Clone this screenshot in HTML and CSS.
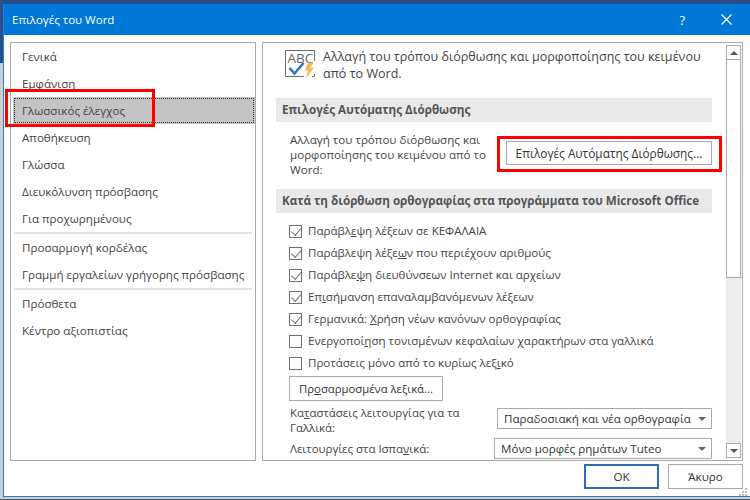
FILE: index.html
```html
<!DOCTYPE html>
<html lang="el">
<head>
<meta charset="utf-8">
<title>Επιλογές του Word</title>
<link rel="stylesheet" href="styles.css">
</head>
<body>
<div class="desktop">
  <div class="dialog">
    <header class="titlebar">
      <span class="title">Επιλογές του Word</span>
      <span class="help">?</span>
      <svg class="close" width="11" height="11" viewBox="0 0 11 11"><path d="M.5.5l10 10M10.5.5l-10 10" stroke="#fff" stroke-width="1.2" fill="none"/></svg>
    </header>
    <div class="body">
      <div class="panes">
        <nav class="nav">
          <div class="nav-item">Γενικά</div>
          <div class="nav-item">Εμφάνιση</div>
          <div class="nav-item selected"><span>Γλωσσικός έλεγχος</span></div>
          <div class="nav-item">Αποθήκευση</div>
          <div class="nav-item">Γλώσσα</div>
          <div class="nav-item">Διευκόλυνση πρόσβασης</div>
          <div class="nav-item">Για προχωρημένους</div>
          <div class="nav-sep"></div>
          <div class="nav-item">Προσαρμογή κορδέλας</div>
          <div class="nav-item">Γραμμή εργαλείων γρήγορης πρόσβασης</div>
          <div class="nav-sep"></div>
          <div class="nav-item">Πρόσθετα</div>
          <div class="nav-item">Κέντρο αξιοπιστίας</div>
        </nav>
        <main class="content">
          <div class="scroll-area">
            <div class="intro">
              <svg class="abc" width="31" height="29" viewBox="0 0 31 29">
                <path d="M19 26.5H.5V.5h29V11M27 26.5h2.500V24" fill="none" stroke="#6d6d6d"/>
                <text x="2.500" y="12.500" class="abc-text">ABC</text>
                <path d="M4.500 18l5 5.500 9-10.500" fill="none" stroke="#2f75b5" stroke-width="2.600"/>
                <path d="M23 12.500h5.500l-3 5h3.500l-8 11 2-8h-3z" fill="#f4b860"/>
              </svg>
              <p>Αλλαγή του τρόπου διόρθωσης και μορφοποίησης του κειμένου από το Word.</p>
            </div>
            <h2 class="section">Επιλογές Αυτόματης Διόρθωσης</h2>
            <div class="autocorrect">
              <p>Αλλαγή του τρόπου διόρθωσης και μορφοποίησης του κειμένου από το Word:</p>
              <button class="btn btn-auto">Επιλογές Αυτόματης Διόρθωσης...</button>
            </div>
            <h2 class="section">Κατά τη διόρθωση ορθογραφίας στα προγράμματα του Microsoft Office</h2>
            <ul class="checks">
              <li><span class="box checked"></span><span class="check-label">Παράβλ<u>ε</u>ψη λέξεων σε ΚΕΦΑΛΑΙΑ</span></li>
              <li><span class="box checked"></span><span class="check-label">Παράβλεψη λέξε<u>ω</u>ν που περιέχουν αριθμούς</span></li>
              <li><span class="box checked"></span><span class="check-label">Παράβλε<u>ψ</u>η διευθύνσεων Internet και αρχείων</span></li>
              <li><span class="box checked"></span><span class="check-label">Επ<u>ι</u>σήμανση επαναλαμβανόμενων λέξεων</span></li>
              <li><span class="box checked"></span><span class="check-label">Γερμανικά: <u>Χ</u>ρήση νέων κανόνων ορθογραφίας</span></li>
              <li><span class="box"></span><span class="check-label">Ενεργοποί<u>η</u>ση τονισμένων κεφαλαίων χαρακτήρων στα γαλλικά</span></li>
              <li><span class="box"></span><span class="check-label">Προτάσεις μόνο από το κυρίως λεξ<u>ι</u>κό</span></li>
            </ul>
            <button class="btn btn-dict">Πρ<u>ο</u>σαρμοσμένα λεξικά...</button>
            <div class="field field-fr">
              <label>Κα<u>τ</u>αστάσεις λειτουργίας για τα Γαλλικά:</label>
              <div class="select sel-fr"><span>Παραδοσιακή και νέα ορθογραφία</span><i class="caret"></i></div>
            </div>
            <div class="field field-es">
              <label>Λειτουργίες στα Ισπα<u>ν</u>ικά:</label>
              <div class="select sel-es"><span>Μόνο μορφές ρημάτων Tuteo</span><i class="caret"></i></div>
            </div>
          </div>
          <div class="scrollbar">
            <div class="arrow up"><i></i></div>
            <div class="thumb"></div>
            <div class="track"></div>
            <div class="arrow down"><i></i></div>
          </div>
        </main>
      </div>
      <footer class="footer">
        <button class="btn btn-ok">OK</button>
        <button class="btn btn-cancel">Άκυρο</button>
      </footer>
    </div>
    <div class="highlight hl-nav"></div>
    <div class="highlight hl-btn"></div>
    <svg class="grip" width="9" height="9" viewBox="0 0 9 9"><path d="M6 0h2v2H6zM3 3h2v2H3zM6 3h2v2H6zM0 6h2v2H0zM3 6h2v2H3zM6 6h2v2H6z" fill="#bdbdbd"/></svg>
  </div>
</div>
</body>
</html>
```

FILE: styles.css
```css
* { box-sizing: border-box; }
html, body { margin: 0; padding: 0; }
body {
  width: 750px; height: 500px; overflow: hidden;
  font-family: "Open Sans", "Noto Sans", sans-serif;
  font-size: 11.6px; color: #444;
}
.desktop {
  width: 750px; height: 500px;
  background: linear-gradient(#2b4f8a 0, #2b4f8a 63px, #cfcfcf 63px, #cfcfcf 499px, #555 499px);
  padding: 4px 0 0 3px;
}
.dialog {
  position: relative;
  width: 747px; height: 493px;
  background: #fff;
  border-left: 1px solid #1883d7;
  border-bottom: 1px solid #1883d7;
  display: flex; flex-direction: column;
}
.titlebar {
  height: 31px; flex: none;
  background: #0078d7;
  color: #fff;
  display: flex; align-items: center;
  padding: 0 0 0 8px;
}
.title { font-size: 11.5px; flex: 1; }
.help { font-size: 13px; margin-right: 36px; }
.close { margin-right: 18px; }
.body { flex: 1; display: flex; flex-direction: column; padding: 7px 0 0 6px; }
.panes { display: flex; gap: 6px; height: 419px; }
.nav {
  width: 246px; flex: none;
  border: 1px solid #a9a9a9;
  padding: 0 0 0 2px;
  height: 419px;
}
.nav-item {
  height: 27px; line-height: 27px; padding-left: 9px;
  white-space: nowrap;
}
.nav-item.selected { background: #c4c4c4; padding: 1px; line-height: 23px; }
.nav-item.selected span { display: block; height: 25px; border: 1px dotted #333; padding-left: 7px; }
.nav-sep { height: 2px; background: #e6e6e6; margin: 0 3px 0 1px; }
.content {
  flex: none; width: 481px;
  border: 1px solid #a9a9a9;
  display: flex; height: 419px;
  overflow: hidden;
}
.scroll-area { flex: 1; min-width: 0; padding: 0 14px 0 13px; overflow: hidden; }
.intro { display: flex; gap: 7px; padding: 7px 0 0 9px; height: 55px; }
.intro p { margin: -2px 0 0; font-size: 12.55px; line-height: 17px; }
.abc { flex: none; overflow: visible; }
.abc-text { font: 13.5px "Open Sans", sans-serif; fill: #666; }
.section {
  margin: 0; height: 24px; line-height: 23px;
  background: #e9e9e9;
  padding-left: 6px;
  font-size: 11.65px; font-weight: 700; color: #555;
  white-space: nowrap; overflow: hidden;
}
.autocorrect { display: flex; height: 67px; padding: 10px 0 0 14px; gap: 6px; }
.autocorrect p { margin: 0; width: 210px; flex: none; line-height: 15px; }
.btn {
  background: #fff;
  border: 1px solid #a9a9a9;
  font: inherit; color: #333;
  padding: 0;
  height: 25px;
}
.btn-auto { width: 206px; height: 24px; font-size: 11.85px; flex: none; margin-top: 9px; }
.checks { list-style: none; margin: 0; padding: 7px 0 0 13px; }
.checks li { height: 22px; display: flex; align-items: center; gap: 6px; white-space: nowrap; font-size: 11.55px; }
.check-label { padding-bottom: 2px; }
.box { width: 13px; height: 13px; border: 1px solid #6e6e6e; flex: none; position: relative; }
.box.checked::after {
  content: ""; position: absolute; left: 3px; top: 0;
  width: 5px; height: 8px;
  border: solid #777; border-width: 0 1.5px 1.5px 0;
  transform: rotate(40deg);
}
.btn-dict { display: block; margin: 2px 0 0 13px; width: 154px; height: 25px; font-size: 11.3px; }
.field { display: flex; justify-content: space-between; padding-left: 14px; }
.field label { line-height: 15px; font-size: 11.45px; }
.field-fr { margin-top: 3px; }
.field-fr label { width: 190px; padding-top: 1px; }
.field-fr .select { margin-top: 4px; }
.field-es { margin-top: 3px; }
.field-es label { line-height: 21px; }
.select {
  border: 1px solid #a9a9a9; height: 21px; flex: none;
  display: flex; align-items: center; justify-content: space-between;
  padding: 0 5px 0 6px; font-size: 11.6px; color: #333; white-space: nowrap;
}
.sel-fr { width: 215px; }
.sel-es { width: 218px; }
.caret { width: 0; height: 0; border: 4px solid transparent; border-top: 4px solid #666; border-bottom: 0; }
.scrollbar { width: 15px; flex: none; display: flex; flex-direction: column; background: #ececec; margin: 2px 1px 2px 0; }
.arrow { height: 15px; border: 1px solid #a9a9a9; background: #fff; flex: none; display: flex; align-items: center; justify-content: center; }
.arrow i { width: 0; height: 0; border: 4px solid transparent; }
.up i { border-bottom: 4px solid #555; border-top: 0; }
.down i { border-top: 4px solid #555; border-bottom: 0; }
.thumb { height: 218px; border: 1px solid #a9a9a9; border-top: 0; background: #fff; flex: none; }
.track { flex: 1; }
.footer { display: flex; justify-content: flex-end; gap: 9px; padding: 3px 7px 0 0; }
.btn-ok { width: 75px; height: 25px; border: 2px solid #2e6cb5; }
.btn-cancel { width: 75px; height: 25px; }
.highlight { position: absolute; border: 3px solid #f00; pointer-events: none; }
.hl-nav { left: 1px; top: 85px; width: 150px; height: 38px; }
.hl-btn { left: 493px; top: 132px; width: 225px; height: 36px; }
.grip { position: absolute; left: 735px; top: 484px; }
```
